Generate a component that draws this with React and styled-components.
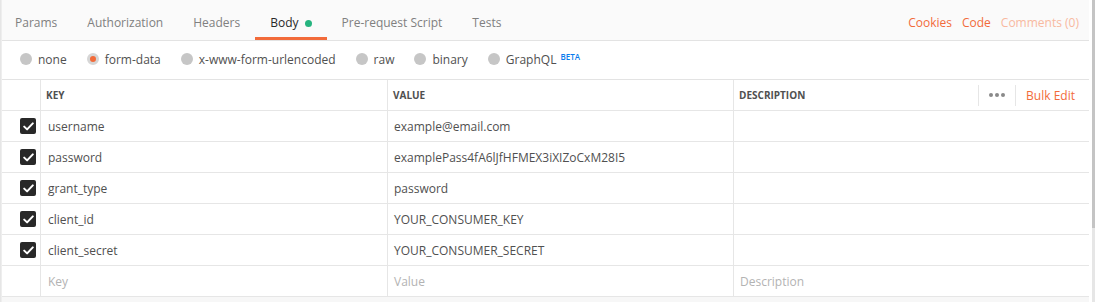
import React from "react";
import styled, { createGlobalStyle } from "styled-components";

const GlobalStyle = createGlobalStyle`
  html, body {
    margin: 0;
    padding: 0;
    background: #ffffff;
  }
  body {
    font-family: "Open Sans", "Liberation Sans", sans-serif;
    font-size: 12px;
    color: #505050;
  }
`;

const Frame = styled.div`
  display: flex;
  width: 1095px;
  height: 302px;
  overflow: hidden;
  background: #ffffff;
`;

const EdgeShadow = styled.div`
  width: 2px;
  flex-shrink: 0;
  background: linear-gradient(to right, #e2e2e2, #f2f2f2);
`;

const Main = styled.div`
  width: 1087px;
  flex-shrink: 0;
  display: flex;
  flex-direction: column;
`;

const ScrollTrack = styled.div`
  width: 3px;
  margin-left: 3px;
  display: flex;
  flex-direction: column;
  background: #e6e6e6;
`;

const ScrollThumb = styled.div`
  height: 228px;
  background: #c4c4c4;
`;

const TabBar = styled.div`
  height: 41px;
  box-sizing: border-box;
  display: flex;
  justify-content: space-between;
  background: #fafafa;
  border-bottom: 1px solid #e3e3e3;
`;

const Tabs = styled.div`
  display: flex;
  margin-left: -2px;
`;

const Tab = styled.div`
  height: 40px;
  box-sizing: border-box;
  padding: 14px 15px 0;
  line-height: 18px;
  font-size: 12px;
  display: flex;
  align-items: flex-start;
  gap: 6px;
  color: ${(p) => (p.$active ? "#282828" : "#808080")};
  border-bottom: 3px solid ${(p) => (p.$active ? "#f26b3a" : "transparent")};
`;

const Dot = styled.span`
  width: 7px;
  height: 7px;
  margin-top: 6px;
  border-radius: 50%;
  background: #26b47f;
`;

const Links = styled.div`
  display: flex;
  gap: 10px;
  padding: 14px 10px 0 0;
  line-height: 18px;
  font-size: 12px;
`;

const Link = styled.span`
  color: ${(p) => (p.$muted ? "#f8b9a0" : "#f26b3a")};
`;

const RadioRow = styled.div`
  height: 39px;
  box-sizing: border-box;
  display: flex;
  align-items: center;
  gap: 20px;
  padding: 0 0 2px 18px;
  border-bottom: 1px solid #e3e3e3;
  font-size: 12px;
`;

const RadioItem = styled.label`
  display: flex;
  align-items: center;
  gap: 6px;
  color: #505050;
`;

const RadioDot = styled.span`
  width: 12px;
  height: 12px;
  box-sizing: border-box;
  border-radius: 50%;
  background: ${(p) => (p.$on ? "#f26b3a" : "#c6c6c6")};
  border: ${(p) => (p.$on ? "3px solid #d6d6d6" : "none")};
`;

const Beta = styled.sup`
  font-size: 8px;
  font-weight: 600;
  color: #097bed;
  margin-left: 4px;
  position: relative;
  top: -4px;
  vertical-align: baseline;
`;

const TableArea = styled.div`
  flex: 1;
  background: #f7f7f7;
`;

const Row = styled.div`
  display: grid;
  grid-template-columns: 39px 347px 346px 1fr;
  height: 31px;
  box-sizing: border-box;
  background: #ffffff;
  border-bottom: 1px solid #e6e6e6;
`;

const Cell = styled.div`
  display: flex;
  align-items: center;
  padding-left: ${(p) => (p.$pad ? `${p.$pad}px` : "6px")};
  border-right: ${(p) => (p.$last ? "none" : "1px solid #e6e6e6")};
  color: ${(p) => (p.$placeholder ? "#b3b3b3" : "#505050")};
  white-space: nowrap;
`;

const HeadCell = styled(Cell)`
  font-size: 10px;
  font-weight: 700;
  color: #505050;
  padding-left: 5px;
`;

const CheckCell = styled.div`
  display: flex;
  align-items: center;
  justify-content: flex-end;
  padding-right: 4px;
  border-right: 1px solid #e6e6e6;
`;

const Checkbox = styled.span`
  width: 16px;
  height: 16px;
  border-radius: 2px;
  background: #282828;
  display: flex;
  align-items: center;
  justify-content: center;
`;

const DescHead = styled(HeadCell)`
  justify-content: space-between;
  padding-right: 14px;
`;

const HeadTools = styled.div`
  display: flex;
  align-items: center;
  height: 21px;
`;

const MoreButton = styled.span`
  display: flex;
  gap: 2px;
  padding: 0 10px;
  height: 21px;
  align-items: center;
  border-left: 1px solid #e6e6e6;
  border-right: 1px solid #e6e6e6;
`;

const Pip = styled.span`
  width: 4px;
  height: 4px;
  border-radius: 50%;
  background: #8a8a8a;
`;

const BulkEdit = styled.span`
  font-weight: 400;
  font-size: 12px;
  color: #f26b3a;
  padding-left: 10px;
`;

const Check = () => (
  <svg width="11" height="9" viewBox="0 0 11 9">
    <path
      d="M1.2 4.6 L4.1 7.4 L9.8 1.4"
      fill="none"
      stroke="#ffffff"
      strokeWidth="2"
      strokeLinecap="round"
      strokeLinejoin="round"
    />
  </svg>
);

const tabs = ["Params", "Authorization", "Headers", "Body", "Pre-request Script", "Tests"];
const modes = ["none", "form-data", "x-www-form-urlencoded", "raw", "binary", "GraphQL"];
const rows = [
  ["username", "example@email.com"],
  ["password", "examplePass4fA6lJfHFMEX3iXIZoCxM28I5"],
  ["grant_type", "password"],
  ["client_id", "YOUR_CONSUMER_KEY"],
  ["client_secret", "YOUR_CONSUMER_SECRET"],
];

export default function App() {
  return (
    <>
      <GlobalStyle />
      <Frame>
        <EdgeShadow />
        <Main>
          <TabBar>
            <Tabs>
              {tabs.map((t) => (
                <Tab key={t} $active={t === "Body"}>
                  {t}
                  {t === "Body" && <Dot />}
                </Tab>
              ))}
            </Tabs>
            <Links>
              <Link>Cookies</Link>
              <Link>Code</Link>
              <Link $muted>Comments (0)</Link>
            </Links>
          </TabBar>

          <RadioRow>
            {modes.map((m) => (
              <RadioItem key={m}>
                <RadioDot $on={m === "form-data"} />
                <span>
                  {m}
                  {m === "GraphQL" && <Beta>BETA</Beta>}
                </span>
              </RadioItem>
            ))}
          </RadioRow>

          <TableArea>
            <Row>
              <CheckCell />
              <HeadCell>KEY</HeadCell>
              <HeadCell>VALUE</HeadCell>
              <DescHead $last>
                DESCRIPTION
                <HeadTools>
                  <MoreButton>
                    <Pip />
                    <Pip />
                    <Pip />
                  </MoreButton>
                  <BulkEdit>Bulk Edit</BulkEdit>
                </HeadTools>
              </DescHead>
            </Row>
            {rows.map(([k, v]) => (
              <Row key={k}>
                <CheckCell>
                  <Checkbox>
                    <Check />
                  </Checkbox>
                </CheckCell>
                <Cell $pad={7}>{k}</Cell>
                <Cell>{v}</Cell>
                <Cell $last />
              </Row>
            ))}
            <Row>
              <CheckCell />
              <Cell $pad={7} $placeholder>Key</Cell>
              <Cell $placeholder>Value</Cell>
              <Cell $placeholder $last>Description</Cell>
            </Row>
          </TableArea>
        </Main>
        <ScrollTrack>
          <ScrollThumb />
        </ScrollTrack>
      </Frame>
    </>
  );
}
